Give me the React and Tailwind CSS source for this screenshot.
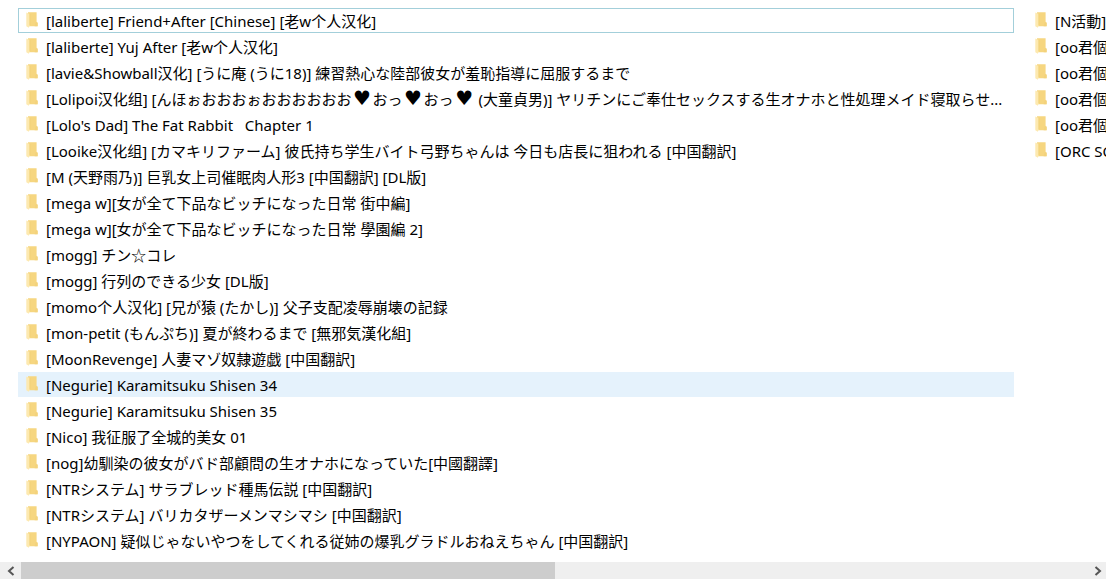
import React, { useState } from "react";

const folders = [
  "[laliberte] Friend+After [Chinese] [老w个人汉化]",
  "[laliberte] Yuj After [老w个人汉化]",
  "[lavie&Showball汉化] [うに庵 (うに18)] 練習熱心な陸部彼女が羞恥指導に屈服するまで",
  "[Lolipoi汉化组] [んほぉおおおぉおおおおおお♥おっ♥おっ♥ (大童貞男)] ヤリチンにご奉仕セックスする生オナホと性処理メイド寝取らせ...",
  "[Lolo's Dad] The Fat Rabbit   Chapter 1",
  "[Looike汉化组] [カマキリファーム] 彼氏持ち学生バイト弓野ちゃんは 今日も店長に狙われる [中国翻訳]",
  "[M (天野雨乃)] 巨乳女上司催眠肉人形3 [中国翻訳] [DL版]",
  "[mega w][女が全て下品なビッチになった日常 街中編]",
  "[mega w][女が全て下品なビッチになった日常 學園編 2]",
  "[mogg] チン☆コレ",
  "[mogg] 行列のできる少女 [DL版]",
  "[momo个人汉化] [兄が猿 (たかし)] 父子支配凌辱崩壊の記録",
  "[mon-petit (もんぷち)] 夏が終わるまで [無邪気漢化組]",
  "[MoonRevenge] 人妻マゾ奴隷遊戯 [中国翻訳]",
  "[Negurie] Karamitsuku Shisen 34",
  "[Negurie] Karamitsuku Shisen 35",
  "[Nico] 我征服了全城的美女 01",
  "[nog]幼馴染の彼女がバド部顧問の生オナホになっていた[中國翻譯]",
  "[NTRシステム] サラブレッド種馬伝説 [中国翻訳]",
  "[NTRシステム] バリカタザーメンマシマシ [中国翻訳]",
  "[NYPAON] 疑似じゃないやつをしてくれる従姉の爆乳グラドルおねえちゃん [中国翻訳]",
];

const moreFolders = ["[N活動]", "[oo君個", "[oo君個", "[oo君個", "[oo君個", "[ORC SO"];

const FolderIcon = () => (
  <svg width="12" height="16" viewBox="0 0 12 16" className="-mt-[2px] shrink-0" aria-hidden="true">
    <path d="M2 0.3h8.6v9.4l1 1v3.6H2z" fill="#f6d680" />
    <path d="M9.6 10.2 11.6 10.7v3.6H8.6z" fill="#f3d27c" />
    <path d="M0.3 0.4 3.8 2v11.2L2.8 15.8 0.3 14.3z" fill="#fde9b0" />
    <path d="M3.8 2v11.2" stroke="#eecb6c" strokeWidth="0.6" />
  </svg>
);

// hearts are drawn larger than the text around them
const FolderName = ({ name }) => (
  <span>
    {name.split(/(♥)/).map((part, i) =>
      part === "♥" ? (
        <span key={i} className="inline-block w-[21px] text-center font-['DejaVu_Sans'] text-[20px] leading-4">
          {part}
        </span>
      ) : (
        part
      )
    )}
  </span>
);

const FolderRow = ({ name, focused, hovered, onSelect }) => (
  <li>
    <button
      type="button"
      onClick={onSelect}
      className={`flex h-[25px] w-full items-center gap-2 border px-[7px] text-left whitespace-pre ${
        focused ? "border-[#a3cfda]" : "border-transparent"
      } ${hovered ? "bg-[#e5f2fc]" : "hover:bg-[#e5f2fc]"}`}
    >
      <FolderIcon />
      <FolderName name={name} />
    </button>
  </li>
);

const App = () => {
  const [focused, setFocused] = useState(folders[0]);

  return (
    <div className="flex h-screen flex-col overflow-hidden bg-white font-['Noto_Sans','Noto_Sans_CJK_SC','DejaVu_Sans',sans-serif] text-[15px] leading-5 text-black">
      {/* Folder columns */}
      <main className="flex flex-1 gap-[13px] overflow-hidden pt-2 pl-[18px]">
        <ul className="flex w-[996px] shrink-0 flex-col gap-px">
          {folders.map((name) => (
            <FolderRow
              key={name}
              name={name}
              focused={name === focused}
              hovered={name === "[Negurie] Karamitsuku Shisen 34"}
              onSelect={() => setFocused(name)}
            />
          ))}
        </ul>
        <ul className="flex w-[996px] shrink-0 flex-col gap-px">
          {moreFolders.map((name, i) => (
            <FolderRow key={i} name={name} onSelect={() => setFocused("")} />
          ))}
        </ul>
      </main>

      {/* Horizontal scroll bar */}
      <div className="flex h-[17px] shrink-0 bg-[#efefef]">
        <button type="button" aria-label="Scroll left" className="flex w-[21px] items-center justify-center">
          <svg width="8" height="10" viewBox="0 0 8 10" fill="none" stroke="#555" strokeWidth="2">
            <path d="M6.5 1 2 5l4.5 4" />
          </svg>
        </button>
        <div className="flex-1">
          <div className="h-full w-1/2 bg-[#cdcdcd]" />
        </div>
        <button type="button" aria-label="Scroll right" className="flex w-[17px] items-center justify-center">
          <svg width="8" height="10" viewBox="0 0 8 10" fill="none" stroke="#555" strokeWidth="2">
            <path d="M1.5 1 6 5l-4.5 4" />
          </svg>
        </button>
      </div>
    </div>
  );
};

export default App;
